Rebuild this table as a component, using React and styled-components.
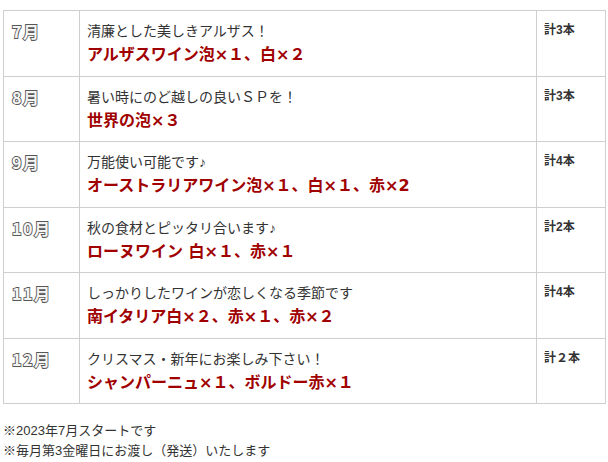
import React from "react";
import styled, { createGlobalStyle } from "styled-components";

const Global = createGlobalStyle`
  html, body { margin: 0; padding: 0; background: #fff; }
  body { font-family: "Liberation Sans", "Noto Sans CJK JP", sans-serif; color: #333; }
  *, *::before, *::after { box-sizing: border-box; }
`;

const Page = styled.div`
  padding: 10px 2px 0 3px;
  width: 608px;
`;

const Table = styled.table`
  width: 603px;
  border-collapse: collapse;
  table-layout: fixed;
`;

const Row = styled.tr`
  height: 65.5px;
`;

const Cell = styled.td`
  border: 1px solid #cfcfcf;
  vertical-align: top;
  padding: 9px 7px 0;
  width: ${(p) => p.$w || "auto"};
`;

const Month = styled.div`
  font-family: "Noto Sans CJK JP", sans-serif;
  font-weight: 700;
  font-size: 16px;
  line-height: 23px;
  color: #f4f4f4;
  letter-spacing: 1.5px;
  -webkit-text-stroke: 1.8px #585858;
  paint-order: stroke fill;
  padding-left: 1px;
`;

const Desc = styled.div`
  font-size: 14px;
  line-height: 23px;
  color: #333;
`;

const Wines = styled.div`
  font-family: "DejaVu Sans", "Noto Sans CJK JP", sans-serif;
  font-size: 16px;
  line-height: 24px;
  font-weight: bold;
  color: #a00000;
`;

const Total = styled.div`
  font-size: 12px;
  line-height: 16px;
  font-weight: bold;
  color: #333;
  padding-top: 2px;
`;

const Notes = styled.div`
  margin-top: 17px;
  font-size: 13px;
  line-height: 20px;
  color: #333;
`;

const rows = [
  ["7月", "清廉とした美しきアルザス！", "アルザスワイン泡×１、白×２", "計3本"],
  ["8月", "暑い時にのど越しの良いＳＰを！", "世界の泡×３", "計3本"],
  ["9月", "万能使い可能です♪", "オーストラリアワイン泡×１、白×１、赤×2", "計4本"],
  ["10月", "秋の食材とピッタリ合います♪", "ローヌワイン 白×１、赤×１", "計2本"],
  ["11月", "しっかりしたワインが恋しくなる季節です", "南イタリア白×２、赤×１、赤×２", "計4本"],
  ["12月", "クリスマス・新年にお楽しみ下さい！", "シャンパーニュ×１、ボルドー赤×１", "計２本"],
];

export default function App() {
  return (
    <Page>
      <Global />
      <Table>
        <tbody>
          {rows.map(([m, d, w, t]) => (
            <Row key={m}>
              <Cell $w="76px">
                <Month>{m}</Month>
              </Cell>
              <Cell>
                <Desc>{d}</Desc>
                <Wines>{w}</Wines>
              </Cell>
              <Cell $w="69px">
                <Total>{t}</Total>
              </Cell>
            </Row>
          ))}
        </tbody>
      </Table>
      <Notes>
        <div>※2023年7月スタートです</div>
        <div>※毎月第3金曜日にお渡し（発送）いたします</div>
      </Notes>
    </Page>
  );
}
